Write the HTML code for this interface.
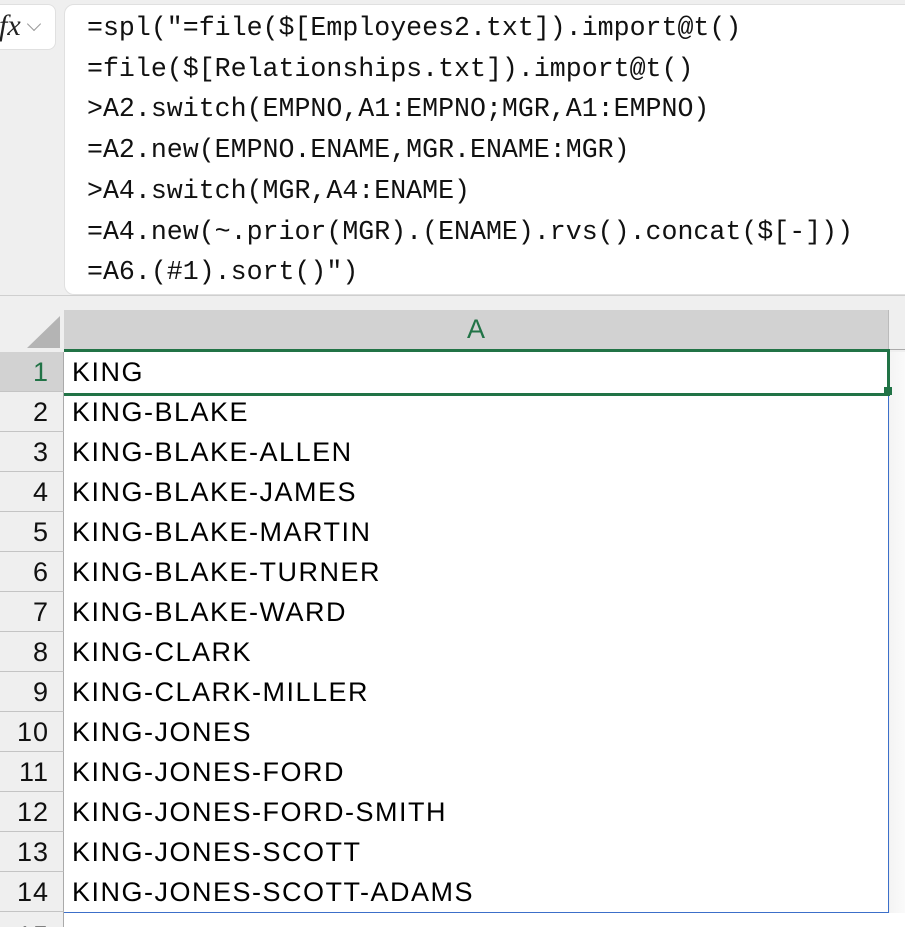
<!DOCTYPE html>
<html style="height:927px;overflow:hidden"><head><style>
body{margin:0;width:905px;height:927px;background:#efefef;position:relative;overflow:hidden;font-family:"Liberation Sans",sans-serif}
.fx{position:absolute;left:-10px;top:4px;width:64px;height:44px;background:#fff;border:1px solid #e0e0e0;border-radius:8px}
.fx span{position:absolute;left:8px;top:4px;font:italic 30px "Liberation Serif",serif;color:#222}
.fx i{position:absolute;left:38px;top:14px;width:9px;height:9px;border-right:1.5px solid #999;border-bottom:1.5px solid #999;transform:rotate(45deg)}
.fb{position:absolute;left:64px;top:4px;width:860px;height:291px;background:#fff;border:1px solid #e0e0e0;border-radius:10px;box-sizing:border-box}
.code{position:absolute;left:87px;top:8px;font:26.6px/40.7px "Liberation Mono",monospace;color:#111;white-space:pre}
.hdr{position:absolute;left:64px;top:310px;width:824px;height:39px;background:#d2d2d2;border-right:1px solid #bbb;text-align:center;font-size:27px;line-height:39px;color:#217346}
.gline{position:absolute;left:64px;top:349px;width:824px;height:3px;background:#217346}
.hline{position:absolute;left:888px;top:349px;width:17px;height:1px;background:#aaa}
.corner{position:absolute;left:27px;top:316px;width:0;height:0;border-left:33px solid transparent;border-bottom:32px solid #b4b4b4}
.rh{position:absolute;left:0;width:63px;height:39px;border-bottom:1px solid #c4c4c4;border-right:1px solid #aaa;font-size:27px;line-height:40px;color:#111;overflow:hidden}
.rh span{position:absolute;right:14px;letter-spacing:1px}
.cells{position:absolute;left:64px;top:352px;width:824px;height:560px;background:#fff;border-right:1.5px solid #3c6fc9;border-bottom:1.5px solid #3c6fc9}
.c{position:absolute;left:8px;font-size:27px;letter-spacing:1.5px;line-height:40px;color:#000;white-space:nowrap}
.right{position:absolute;left:890px;top:352px;width:15px;height:575px;background:linear-gradient(90deg,#f4f4f4,#fafafa)}
.sel{position:absolute;left:64px;top:349px;width:823px;height:41px;border:3px solid #217346;border-left:none;box-sizing:content-box}
.h{position:absolute;left:884px;top:387px;width:8px;height:8px;background:#217346}
.low{position:absolute;left:64px;top:913px;width:841px;height:14px;background:#fff}
</style></head><body>
<div class="fx"><span>fx</span><i></i></div>
<div class="fb"></div>
<div class="code">=spl("=file($[Employees2.txt]).import@t()
=file($[Relationships.txt]).import@t()
&gt;A2.switch(EMPNO,A1:EMPNO;MGR,A1:EMPNO)
=A2.new(EMPNO.ENAME,MGR.ENAME:MGR)
&gt;A4.switch(MGR,A4:ENAME)
=A4.new(~.prior(MGR).(ENAME).rvs().concat($[-]))
=A6.(#1).sort()")</div>
<div style="position:absolute;left:0;top:295px;width:905px;height:1px;background:#cfcfcf"></div>
<div class="corner"></div>
<div class="hdr">A</div>
<div class="gline"></div>
<div class="hline"></div>
<div class="right"></div>
<div class="low"></div>
<div class="cells">
<div class="c" style="top:0">KING</div>
<div class="c" style="top:40px">KING-BLAKE</div>
<div class="c" style="top:80px">KING-BLAKE-ALLEN</div>
<div class="c" style="top:120px">KING-BLAKE-JAMES</div>
<div class="c" style="top:160px">KING-BLAKE-MARTIN</div>
<div class="c" style="top:200px">KING-BLAKE-TURNER</div>
<div class="c" style="top:240px">KING-BLAKE-WARD</div>
<div class="c" style="top:280px">KING-CLARK</div>
<div class="c" style="top:320px">KING-CLARK-MILLER</div>
<div class="c" style="top:360px">KING-JONES</div>
<div class="c" style="top:400px">KING-JONES-FORD</div>
<div class="c" style="top:440px">KING-JONES-FORD-SMITH</div>
<div class="c" style="top:480px">KING-JONES-SCOTT</div>
<div class="c" style="top:520px">KING-JONES-SCOTT-ADAMS</div>
</div>
<div class="sel"></div><div class="h"></div>
<div class="rh" style="top:352px;background:#d2d2d2;color:#217346"><span>1</span></div>
<div class="rh" style="top:392px"><span>2</span></div>
<div class="rh" style="top:432px"><span>3</span></div>
<div class="rh" style="top:472px"><span>4</span></div>
<div class="rh" style="top:512px"><span>5</span></div>
<div class="rh" style="top:552px"><span>6</span></div>
<div class="rh" style="top:592px"><span>7</span></div>
<div class="rh" style="top:632px"><span>8</span></div>
<div class="rh" style="top:672px"><span>9</span></div>
<div class="rh" style="top:712px"><span>10</span></div>
<div class="rh" style="top:752px"><span>11</span></div>
<div class="rh" style="top:792px"><span>12</span></div>
<div class="rh" style="top:832px"><span>13</span></div>
<div class="rh" style="top:872px"><span>14</span></div>
<div class="rh" style="top:912px;height:15px;border-bottom:none"><span style="top:4px">15</span></div>
</body></html>
